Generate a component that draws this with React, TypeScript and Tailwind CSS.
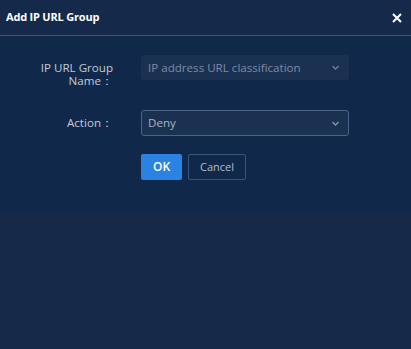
export default function App() {
  return (
    <div className="w-[411px] h-[349px] bg-[#172948] font-['Open_Sans',sans-serif]">
      <div className="flex items-center justify-between h-[36px] pl-[6px] pr-[9px] bg-[#152a4a] border-b border-[#2d5a8c]">
        <span className="text-[11px] font-bold text-white tracking-[-0.2px]">Add IP URL Group</span>
        <svg width="10" height="10" viewBox="0 0 10 10" className="mt-[1px]">
          <path d="M1 1 L9 9 M9 1 L1 9" stroke="#ffffff" strokeWidth="2" />
        </svg>
      </div>
      <div className="bg-[#10294b] pt-[19px] pb-[32px]">
        <div className="flex items-start h-[25px]">
          <div className="w-[113px] pt-[6px] text-right text-[11.6px] leading-[13px] text-[#c3cbd7]">
            IP URL Group
            <br />
            Name：
          </div>
          <div className="ml-[28px] w-[208px] h-[25px] rounded-[3px] bg-[#1b3152] flex items-center justify-between pl-[7px] pr-[10px]">
            <span className="text-[11.6px] text-[#7d8ba0]">IP address URL classification</span>
            <Chevron color="#6f7f98" />
          </div>
        </div>
        <div className="flex items-center mt-[30px]">
          <div className="w-[113px] text-right text-[11.6px] text-[#c3cbd7]">Action：</div>
          <div className="ml-[28px] w-[208px] h-[26px] rounded-[3px] bg-[#1b3152] border border-[#4a6386] flex items-center justify-between pl-[6px] pr-[9px]">
            <span className="text-[11.6px] text-[#aab4c3]">Deny</span>
            <Chevron color="#8895aa" />
          </div>
        </div>
        <div className="flex gap-[6px] ml-[141px] mt-[18px]">
          <button className="w-[41px] h-[26px] rounded-[2px] bg-[#2a82e2] text-[12px] font-semibold text-white">
            OK
          </button>
          <button className="w-[58px] h-[26px] rounded-[2px] border border-[#385480] text-[11px] text-[#b4bdca]">
            Cancel
          </button>
        </div>
      </div>
    </div>
  );
}

function Chevron({ color }: { color: string }) {
  return (
    <svg width="7" height="5" viewBox="0 0 7 5">
      <path d="M0.5 1 L3.5 4 L6.5 1" stroke={color} strokeWidth="1.3" fill="none" />
    </svg>
  );
}
